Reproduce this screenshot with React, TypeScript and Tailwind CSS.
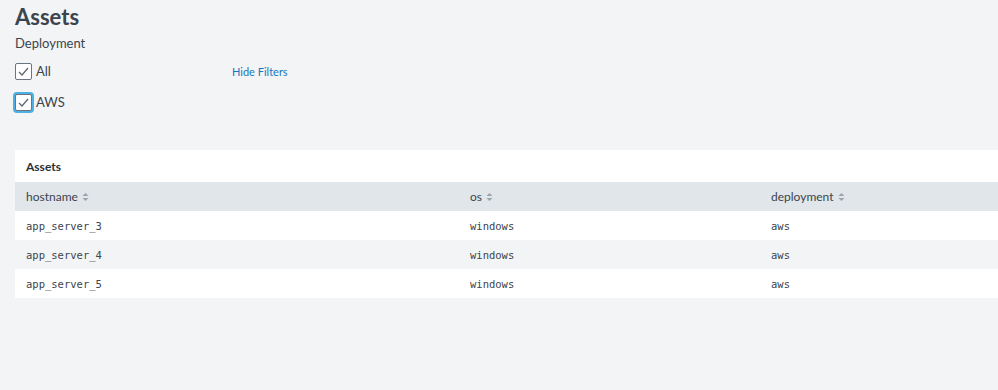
import React from 'react';

const rows = [
  { hostname: 'app_server_3', os: 'windows', deployment: 'aws' },
  { hostname: 'app_server_4', os: 'windows', deployment: 'aws' },
  { hostname: 'app_server_5', os: 'windows', deployment: 'aws' },
];

function Check({ focused }: { focused?: boolean }) {
  return (
    <span
      className={`flex h-[17px] w-[17px] items-center justify-center rounded-[2px] border border-[#6b7480] bg-white ${
        focused ? 'shadow-[0_0_0_2px_#4ab0e6]' : ''
      }`}
    >
      <svg width="13" height="13" viewBox="0 0 13 13" fill="none">
        <path d="M2 7l3 3 6-7" stroke="#5c6773" strokeWidth="1.3" />
      </svg>
    </span>
  );
}

function SortIcon() {
  return (
    <svg width="7" height="10" viewBox="0 0 7 10" className="ml-1">
      <path d="M3.5 1L6.5 4H0.5z" fill="#9aa4ae" />
      <path d="M3.5 9L6.5 6H0.5z" fill="#9aa4ae" />
    </svg>
  );
}

export default function App() {
  return (
    <main className="h-[390px] w-[998px] overflow-hidden bg-[#f2f4f5] font-['Lato',sans-serif] text-[#3c444d]">
      <div className="px-[15px] pt-[3px]">
        <h1 className="text-[22px] font-bold leading-[28px] text-[#3c444d]">Assets</h1>
        <div className="mt-[3px] text-[13px] leading-[18px]">Deployment</div>

        <div className="mt-[10px] flex items-center">
          <label className="flex w-[217px] items-center gap-[4px] text-[13px]">
            <Check />
            <span>All</span>
          </label>
          <button className="text-[11px] text-[#1a74c0]">Hide Filters</button>
        </div>
        <label className="mt-[11px] flex items-center gap-[4px] text-[13px]">
          <Check focused />
          <span>AWS</span>
        </label>
      </div>

      <section className="ml-[15px] mt-[38px] bg-white">
        <h2 className="px-[11px] pb-[7px] pt-[9px] text-[12px] font-bold leading-[16px] text-[#2b3033]">
          Assets
        </h2>
        <div className="grid h-[29px] grid-cols-[444px_301px_1fr] items-center bg-[#e1e6eb] px-[11px] text-[12px] text-[#3c444d]">
          <div className="flex items-center">hostname<SortIcon /></div>
          <div className="flex items-center">os<SortIcon /></div>
          <div className="flex items-center">deployment<SortIcon /></div>
        </div>
        {rows.map((r, i) => (
          <div
            key={r.hostname}
            className={`grid h-[29px] grid-cols-[444px_301px_1fr] items-center px-[11px] pt-[3px] font-['DejaVu_Sans_Mono',monospace] text-[10.5px] text-[#3c444d] ${
              i % 2 === 1 ? 'bg-[#f2f4f5]' : 'bg-white'
            }`}
          >
            <div>{r.hostname}</div>
            <div>{r.os}</div>
            <div>{r.deployment}</div>
          </div>
        ))}
      </section>
    </main>
  );
}
